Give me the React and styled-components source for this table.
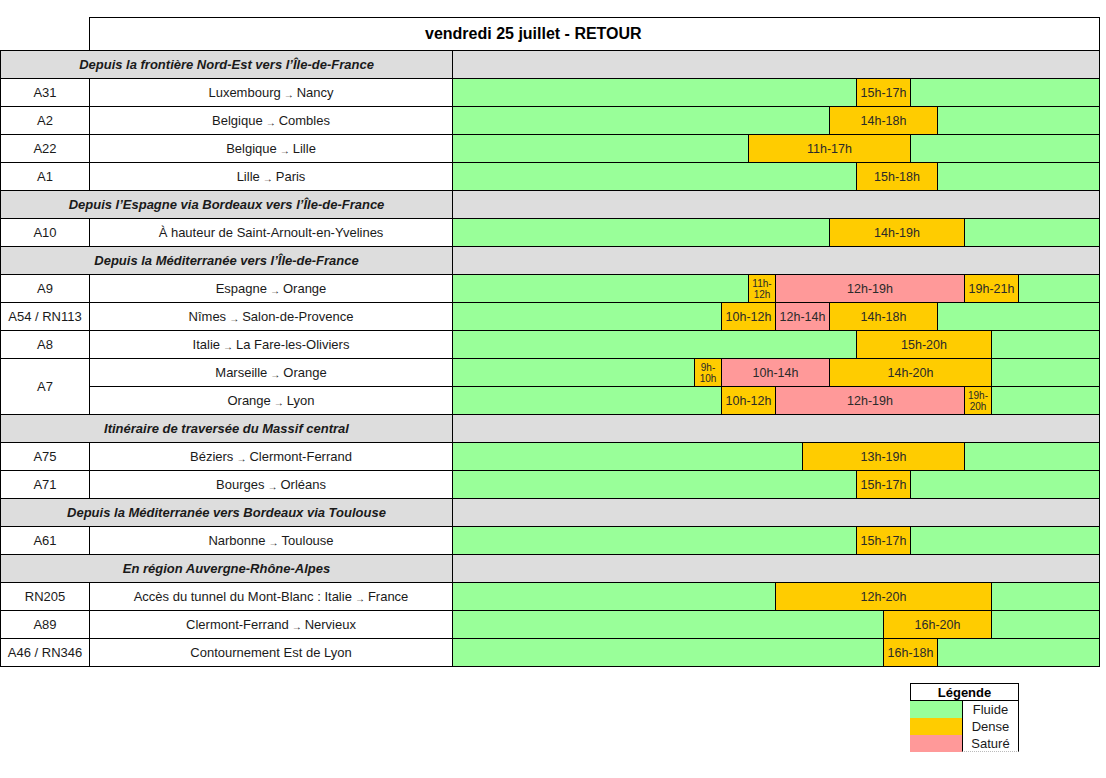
import React from "react";
import styled, { createGlobalStyle } from "styled-components";

const Global = createGlobalStyle`
  html, body { margin: 0; padding: 0; background: #fff; }
  body { font-family: "Liberation Sans", Arial, sans-serif; color: #111; }
`;

const COLORS = { f: "#99ff99", d: "#ffcc00", s: "#ff9999", grey: "#dddddd" };

const Page = styled.div`
  width: 1106px;
  padding-top: 17px;
`;

const Title = styled.div`
  margin-left: 89px;
  width: 1011px;
  height: 33px;
  box-sizing: border-box;
  border: 1px solid #000;
  border-bottom: none;
  display: flex;
  align-items: center;
  padding-left: 335px;
  font-weight: bold;
  font-size: 16px;
  color: #000;
`;

const Grid = styled.div`
  display: grid;
  grid-template-columns: 89px 363px 647px;
  grid-auto-rows: 28px;
  width: 1100px;
  box-sizing: border-box;
  border-left: 1px solid #000;
  border-top: 1px solid #000;
`;

const Cell = styled.div`
  box-sizing: border-box;
  border-right: 1px solid #000;
  border-bottom: 1px solid #000;
  display: flex;
  align-items: center;
  justify-content: center;
  font-size: 13px;
  color: #1a1a1a;
  white-space: nowrap;
  background: #fff;
  grid-row: ${(p) => (p.$rows ? `span ${p.$rows}` : "auto")};
  grid-column: ${(p) => (p.$col ? p.$col : "auto")};
`;

const SectionCell = styled(Cell)`
  grid-column: span 2;
  background: ${COLORS.grey};
  font-weight: bold;
  font-style: italic;
`;

const SectionFill = styled(Cell)`
  background: ${COLORS.grey};
`;

const Timeline = styled.div`
  position: relative;
  box-sizing: border-box;
  border-right: 1px solid #000;
  border-bottom: 1px solid #000;
  background: ${COLORS.f};
  grid-column: 3;
`;

const Segment = styled.div`
  position: absolute;
  top: 0;
  bottom: 0;
  box-sizing: border-box;
  border-left: 1px solid #000;
  border-right: 1px solid #000;
  background: ${(p) => COLORS[p.$type]};
  display: flex;
  align-items: center;
  justify-content: center;
  text-align: center;
  color: #2a2a2a;
  font-size: ${(p) => (p.$small ? "10px" : "12.5px")};
  line-height: ${(p) => (p.$small ? "11px" : "normal")};
  white-space: ${(p) => (p.$small ? "pre" : "nowrap")};
`;

const Arrow = styled.span`
  font-size: 10px;
  margin: 0 3px;
  position: relative;
  top: 2px;
`;

const Legend = styled.div`
  margin: 16px 0 0 910px;
  width: 109px;
  box-sizing: border-box;
`;

const LegendHead = styled.div`
  height: 18px;
  box-sizing: border-box;
  border: 1px solid #000;
  display: flex;
  align-items: center;
  justify-content: center;
  font-weight: bold;
  font-size: 13px;
  color: #000;
`;

const LegendRow = styled.div`
  display: grid;
  grid-template-columns: 52px 57px;
  height: 17px;
`;

const Swatch = styled.div`
  background: ${(p) => COLORS[p.$type]};
`;

const LegendLabel = styled.div`
  box-sizing: border-box;
  border-left: 1px solid #000;
  border-right: 1px solid #000;
  border-bottom: ${(p) => (p.$last ? "1px dotted #bbb" : "none")};
  display: flex;
  align-items: center;
  justify-content: center;
  font-size: 13px;
  color: #1a1a1a;
`;

const data = [
  { section: "Depuis la frontière Nord-Est vers l’Île-de-France" },
  { road: "A31", route: "Luxembourg → Nancy", segs: [[15, 17, "d"]] },
  { road: "A2", route: "Belgique → Combles", segs: [[14, 18, "d"]] },
  { road: "A22", route: "Belgique → Lille", segs: [[11, 17, "d"]] },
  { road: "A1", route: "Lille → Paris", segs: [[15, 18, "d"]] },
  { section: "Depuis l’Espagne via Bordeaux vers l’Île-de-France" },
  { road: "A10", route: "À hauteur de Saint-Arnoult-en-Yvelines", segs: [[14, 19, "d"]] },
  { section: "Depuis la Méditerranée vers l’Île-de-France" },
  {
    road: "A9",
    route: "Espagne → Orange",
    segs: [[11, 12, "d", "11h-\n12h"], [12, 19, "s"], [19, 21, "d"]],
  },
  {
    road: "A54 / RN113",
    route: "Nîmes  → Salon-de-Provence",
    segs: [[10, 12, "d"], [12, 14, "s"], [14, 18, "d"]],
  },
  { road: "A8", route: "Italie → La Fare-les-Oliviers", segs: [[15, 20, "d"]] },
  {
    road: "A7",
    rows: 2,
    route: "Marseille → Orange",
    segs: [[9, 10, "d", "9h-\n10h"], [10, 14, "s"], [14, 20, "d"]],
  },
  {
    cont: true,
    route: "Orange → Lyon",
    segs: [[10, 12, "d"], [12, 19, "s"], [19, 20, "d", "19h-\n20h"]],
  },
  { section: "Itinéraire de traversée du Massif central" },
  { road: "A75", route: "Béziers→ Clermont-Ferrand", segs: [[13, 19, "d"]] },
  { road: "A71", route: "Bourges → Orléans", segs: [[15, 17, "d"]] },
  { section: "Depuis la Méditerranée vers Bordeaux via Toulouse" },
  { road: "A61", route: "Narbonne→ Toulouse", segs: [[15, 17, "d"]] },
  { section: "En région Auvergne-Rhône-Alpes" },
  { road: "RN205", route: "Accès du tunnel du Mont-Blanc : Italie → France", segs: [[12, 20, "d"]] },
  { road: "A89", route: "Clermont-Ferrand → Nervieux", segs: [[16, 20, "d"]] },
  { road: "A46 / RN346", route: "Contournement Est de Lyon", segs: [[16, 18, "d"]] },
];

function Route({ text }) {
  const parts = text.split("→");
  return (
    <>
      {parts.map((p, i) => (
        <React.Fragment key={i}>
          {i > 0 && <Arrow>→</Arrow>}
          {p.trim()}
        </React.Fragment>
      ))}
    </>
  );
}

export default function App() {
  return (
    <Page>
      <Global />
      <Title>vendredi 25 juillet - RETOUR</Title>
      <Grid>
        {data.map((r, i) => {
          if (r.section) {
            return (
              <React.Fragment key={i}>
                <SectionCell>{r.section}</SectionCell>
                <SectionFill />
              </React.Fragment>
            );
          }
          return (
            <React.Fragment key={i}>
              {!r.cont && <Cell $rows={r.rows} $col={1}>{r.road}</Cell>}
              <Cell $col={2}>
                <Route text={r.route} />
              </Cell>
              <Timeline>
                {r.segs.map(([s, e, t, label], j) => (
                  <Segment
                    key={j}
                    $type={t}
                    $small={!!label}
                    style={{ left: 27 * s - 2, width: 27 * (e - s) + 1 }}
                  >
                    {label || `${s}h-${e}h`}
                  </Segment>
                ))}
              </Timeline>
            </React.Fragment>
          );
        })}
      </Grid>
      <Legend>
        <LegendHead>Légende</LegendHead>
        <LegendRow>
          <Swatch $type="f" />
          <LegendLabel>Fluide</LegendLabel>
        </LegendRow>
        <LegendRow>
          <Swatch $type="d" />
          <LegendLabel>Dense</LegendLabel>
        </LegendRow>
        <LegendRow>
          <Swatch $type="s" />
          <LegendLabel $last>Saturé</LegendLabel>
        </LegendRow>
      </Legend>
    </Page>
  );
}
